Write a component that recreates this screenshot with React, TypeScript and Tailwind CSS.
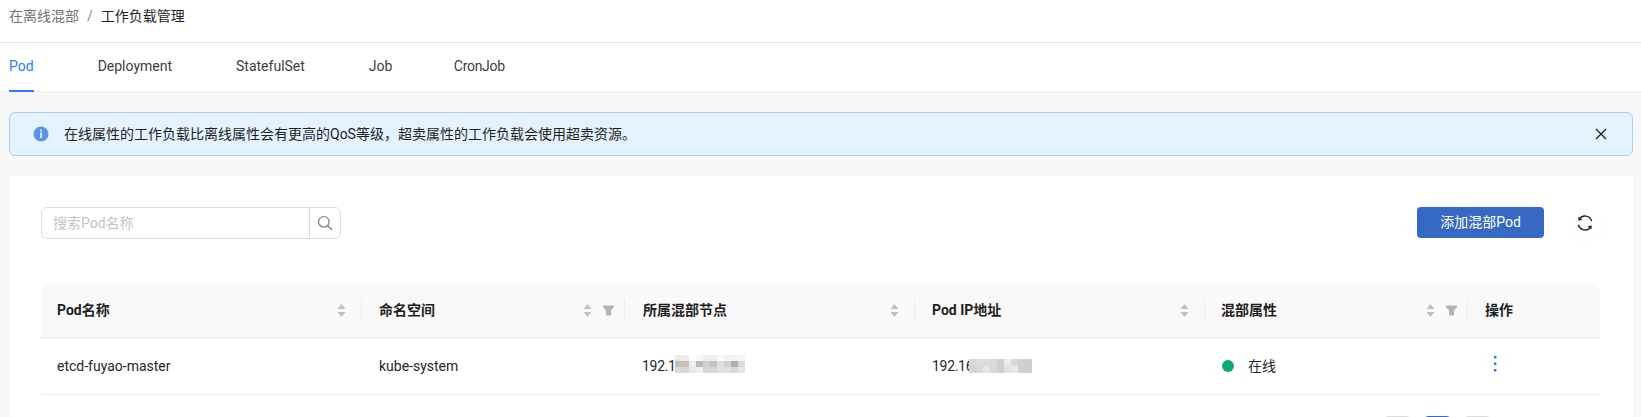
import React from "react";

const FONT = "font-['Roboto','Noto_Sans_CJK_SC',sans-serif]";

function Sort() {
  return (
    <svg width="9" height="15" viewBox="0 0 9 15" className="shrink-0">
      <path d="M4.5 1 L8.5 6 H0.5 Z" fill="#c0c0c0" />
      <path d="M4.5 14 L8.5 9 H0.5 Z" fill="#c0c0c0" />
    </svg>
  );
}

function Filter() {
  return (
    <svg width="11" height="11" viewBox="0 0 11 11" className="shrink-0">
      <path d="M0 0.5 H11 V2 L8 5.5 V10.5 H3 V5.5 L0 2 Z" fill="#b4b4b4" />
    </svg>
  );
}

function Th({ label, filter, last, pad, tight }: { label: string; filter?: boolean; last?: boolean; pad?: boolean; tight?: boolean }) {
  return (
    <div className={`relative flex h-full items-center justify-between ${pad ? "pl-[18px]" : tight ? "pl-4" : "pl-[17px]"} ${filter ? "pr-[11px]" : "pr-4"}`}>
      <span className="text-[14px] font-bold text-[#1f1f1f]">{label}</span>
      {!last && (
        <div className="flex items-center gap-[11px]">
          <Sort />
          {filter && <Filter />}
        </div>
      )}
      {!last && <div className="absolute right-0 top-[16px] h-[22px] w-px bg-[#ececec]" />}
    </div>
  );
}

function Mosaic({ rows, tall }: { rows: string[][]; tall?: boolean }) {
  return (
    <div className={`flex flex-col ${tall ? "" : "mt-[-4px]"}`}>
      {rows.map((r, i) => (
        <div key={i} className="flex">
          {r.map((c, j) => (
            <div key={j} className={tall ? "h-[7px] w-[7px]" : "h-[6px] w-[7px]"} style={{ background: c }} />
          ))}
        </div>
      ))}
    </div>
  );
}

const m1 = [
  ["#ececec", "#ececec", "#ffffff", "#f8f8f8", "#eeeeee", "#eeeeee", "#fbfbfb", "#f2f2f2", "#f2f2f2", "#f5f5f5"],
  ["#c4bfbb", "#c4bfbb", "#e8eff5", "#c0b6b0", "#cfd0cc", "#b8c4d2", "#e6dcd6", "#c8d4dc", "#aeb0ac", "#d8dadc"],
  ["#d8d8d8", "#d8d8d8", "#e4eaee", "#f0f0ec", "#d6d6d4", "#d6d6d4", "#e6dcd8", "#dde2e6", "#d8d8d8", "#e4e6e8"],
];
const m2 = [
  ["#d4d8dc", "#dadee0", "#dcdcdc", "#dedad4", "#cfcfcf", "#e8ebee", "#dcd8d0", "#cdd0d8", "#cfcfcf"],
  ["#d4d4d4", "#d8d8d8", "#e6e8e4", "#d8d8d8", "#cfcfcf", "#dde2e6", "#e6e8e4", "#cfd0d0", "#cfcfcf"],
];

export default function App() {
  return (
    <div className={`h-[417px] overflow-hidden bg-[#f7f7f7] text-[14px] text-[#262626] ${FONT}`}>
      <div className="flex h-[43px] items-start border-b border-[#e6e6e6] bg-white pl-[9px] pt-[6px] leading-[20px]">
        <span className="text-[#737373]">在离线混部</span>
        <span className="mx-[8px] text-[#8c8c8c]">/</span>
        <span className="text-[#1f1f1f]">工作负载管理</span>
      </div>

      <div className="flex h-[49px] items-stretch gap-[64px] border-b border-[#ededed] bg-white pl-[9px]">
        <div className="relative flex items-center pb-[2px] text-[#2b7cff]">
          Pod
          <div className="absolute bottom-[-1px] left-0 h-[2px] w-full bg-[#2b7cff]" />
        </div>
        <div className="flex items-center pb-[2px] text-[#3d3d3d]">Deployment</div>
        <div className="flex items-center pb-[2px] text-[#3d3d3d]">StatefulSet</div>
        <div className="flex w-[21px] items-center pb-[2px] text-[#3d3d3d]">Job</div>
        <div className="flex items-center pb-[2px] tracking-[-0.3px] text-[#3d3d3d]">CronJob</div>
      </div>

      <div className="ml-[9px] mr-[8px] mt-[20px] flex h-[44px] items-center rounded-[6px] border border-[#a9d0fb] bg-[#e3f2fe] pl-[23px] pr-[25px]">
        <svg width="16" height="16" viewBox="0 0 16 16" className="shrink-0">
          <circle cx="8" cy="8" r="7.5" fill="#5b93ec" />
          <rect x="7.2" y="3.6" width="1.6" height="1.7" fill="#fff" />
          <rect x="7.2" y="6.4" width="1.6" height="5.6" fill="#fff" />
        </svg>
        <span className="ml-[15px] flex-1 text-[#1f1f1f]">
          在线属性的工作负载比离线属性会有更高的QoS等级，超卖属性的工作负载会使用超卖资源。
        </span>
        <svg width="12" height="12" viewBox="0 0 12 12" className="shrink-0">
          <path d="M1 1 L11 11 M11 1 L1 11" stroke="#1f1f1f" strokeWidth="1.3" fill="none" />
        </svg>
      </div>

      <div className="ml-[9px] mr-[8px] mt-[20px] h-[300px] bg-white pl-[32px] pr-[33px] pt-[31px]">
        <div className="flex items-start justify-between">
          <div className="flex h-[32px] w-[300px] rounded-[6px] border border-[#dcdcdc] bg-white">
            <div className="flex flex-1 items-center pl-[11px] text-[#c4c4c4]">搜索Pod名称</div>
            <div className="flex w-[31px] items-center justify-center border-l border-[#dcdcdc]">
              <svg width="16" height="16" viewBox="0 0 16 16">
                <circle cx="6.8" cy="6.8" r="5.3" stroke="#7a7a7a" strokeWidth="1.2" fill="none" />
                <path d="M10.7 10.7 L15 15" stroke="#7a7a7a" strokeWidth="1.3" />
              </svg>
            </div>
          </div>
          <div className="flex items-start">
            <div className="flex h-[31px] w-[127px] items-center justify-center rounded-[4px] bg-[#3569c3] text-white">
              添加混部Pod
            </div>
            <div className="ml-[25px] mr-[-1px] flex h-[32px] w-[32px] items-center justify-center rounded-[6px] shadow-[0_1px_2px_rgba(0,0,0,0.03)]">
              <svg width="18" height="18" viewBox="0 0 16 16" fill="none">
                <path d="M13.9 6.4 A6.1 6.1 0 0 0 3 4.4" stroke="#262626" strokeWidth="1.3" />
                <path d="M2.1 9.6 A6.1 6.1 0 0 0 13 11.6" stroke="#262626" strokeWidth="1.3" />
                <path d="M1.9 2.4 L2.3 6 L5.8 5 Z" fill="#262626" />
                <path d="M14.1 13.6 L13.7 10 L10.2 11 Z" fill="#262626" />
              </svg>
            </div>
          </div>
        </div>

        <div className="mt-[44px]">
          <div className="grid h-[55px] grid-cols-[321px_263px_290px_290px_263px_132px] rounded-t-[8px] border-b border-[#ececec] bg-[#f9f9f9]">
            <Th label="Pod名称" tight />
            <Th label="命名空间" filter />
            <Th label="所属混部节点" pad />
            <Th label="Pod IP地址" />
            <Th label="混部属性" filter tight />
            <Th label="操作" last />
          </div>
          <div className="grid h-[57px] grid-cols-[321px_263px_290px_290px_263px_132px] items-center border-b border-[#ececec] text-[#262626]">
            <div className="pl-4">etcd-fuyao-master</div>
            <div className="pl-[17px]">kube-system</div>
            <div className="flex items-center pl-[17px]">
              <span className="w-[33px] tracking-[-0.3px]">192.1</span>
              <Mosaic rows={m1} />
            </div>
            <div className="flex items-center pl-[17px]">
              <span className="w-[37px] whitespace-nowrap tracking-[-0.3px]">192.16</span>
              <Mosaic rows={m2} tall />
            </div>
            <div className="flex items-center pl-[17px]">
              <span className="h-[12px] w-[12px] rounded-full bg-[#0bab6e]" />
              <span className="ml-[14px]">在线</span>
            </div>
            <div className="pl-[26px]">
              <svg width="3" height="16" viewBox="0 0 3 16" className="mb-[4px] block">
                <rect x="0" y="0" width="2.4" height="2.4" fill="#3569c3" />
                <rect x="0" y="6.5" width="2.4" height="2.4" fill="#3569c3" />
                <rect x="0" y="13" width="2.4" height="2.4" fill="#3569c3" />
              </svg>
            </div>
          </div>
          <div className="mt-[21px] flex justify-end gap-[13px] pr-[109px]">
            <div className="h-[28px] w-[27px] rounded-[4px] border border-[#dcdcdc]" />
            <div className="h-[28px] w-[27px] rounded-[4px] border border-[#3569c3]" />
            <div className="h-[28px] w-[27px] rounded-[4px] border border-[#dcdcdc]" />
          </div>
        </div>
      </div>
    </div>
  );
}
